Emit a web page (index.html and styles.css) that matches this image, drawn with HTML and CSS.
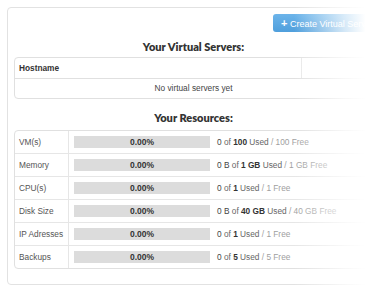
FILE: index.html
```html
<!DOCTYPE html>
<html lang="en">
<head>
  <meta charset="UTF-8">
  <title>Virtual Servers</title>
  <link rel="stylesheet" href="styles.css">
</head>
<body>
  <div class="card">
    <div class="toolbar">
      <button class="create-btn"><span class="plus">+</span> Create Virtual Server</button>
    </div>

    <h2 class="heading">Your Virtual Servers:</h2>
    <div class="servers">
      <div class="servers-head">
        <div class="col-host">Hostname</div>
        <div class="col-rest"></div>
      </div>
      <div class="servers-empty">No virtual servers yet</div>
    </div>

    <h2 class="heading heading-res">Your Resources:</h2>
    <div class="resources">
      <div class="res-row">
        <div class="res-label">VM(s)</div>
        <div class="res-bar-cell"><div class="res-bar">0.00%</div></div>
        <div class="res-info"><span class="num">0</span> of <b>100</b> Used <span class="free">/ 100 Free</span></div>
      </div>
      <div class="res-row">
        <div class="res-label">Memory</div>
        <div class="res-bar-cell"><div class="res-bar">0.00%</div></div>
        <div class="res-info"><span class="num">0 B</span> of <b>1 GB</b> Used <span class="free">/ 1 GB Free</span></div>
      </div>
      <div class="res-row">
        <div class="res-label">CPU(s)</div>
        <div class="res-bar-cell"><div class="res-bar">0.00%</div></div>
        <div class="res-info"><span class="num">0</span> of <b>1</b> Used <span class="free">/ 1 Free</span></div>
      </div>
      <div class="res-row">
        <div class="res-label">Disk Size</div>
        <div class="res-bar-cell"><div class="res-bar">0.00%</div></div>
        <div class="res-info"><span class="num">0 B</span> of <b>40 GB</b> Used <span class="free">/ 40 GB Free</span></div>
      </div>
      <div class="res-row">
        <div class="res-label">IP Adresses</div>
        <div class="res-bar-cell"><div class="res-bar">0.00%</div></div>
        <div class="res-info"><span class="num">0</span> of <b>1</b> Used <span class="free">/ 1 Free</span></div>
      </div>
      <div class="res-row">
        <div class="res-label">Backups</div>
        <div class="res-bar-cell"><div class="res-bar">0.00%</div></div>
        <div class="res-info"><span class="num">0</span> of <b>5</b> Used <span class="free">/ 5 Free</span></div>
      </div>
    </div>

    <div class="fade"></div>
  </div>
</body>
</html>
```

FILE: styles.css
```css
body {
  margin: 0;
  padding: 7px;
  background-color: #ffffff;
  font-family: "Liberation Sans", Arial, sans-serif;
  font-size: 8.3px;
  color: #444;
  overflow: hidden;
}

.card {
  position: relative;
  width: 359px;
  border: 1px solid #e2e2e2;
  border-radius: 4px;
  padding: 6px 6px 15px 6px;
}

.toolbar {
  display: flex;
  justify-content: flex-end;
  height: 18px;
}

.create-btn {
  height: 18px;
  width: 110px;
  margin-right: -10px;
  padding: 0 8px;
  border: none;
  border-radius: 3px;
  background: linear-gradient(#6cb4ea, #4f9fdc);
  color: #ffffff;
  font-family: "Liberation Sans", Arial, sans-serif;
  font-size: 9px;
  text-align: left;
  white-space: nowrap;
  overflow: hidden;
}

.plus {
  font-weight: bold;
  font-size: 11px;
}

.heading {
  margin: 7px 0 2px 0;
  height: 16px;
  line-height: 16px;
  text-align: center;
  font-family: Lato, "Open Sans", sans-serif;
  font-weight: 800;
  font-size: 11px;
  color: #333;
}

.heading-res {
  margin-top: 11px;
  margin-bottom: 4px;
}

.servers {
  border: 1px solid #e0e0e0;
  border-radius: 4px;
}

.servers-head {
  display: flex;
  height: 20px;
  border-bottom: 1px solid #e0e0e0;
}

.col-host {
  width: 282px;
  padding-left: 4px;
  line-height: 20px;
  font-weight: bold;
  color: #333;
  border-right: 1px solid #e8e8e8;
}

.col-rest {
  flex: 1;
}

.servers-empty {
  height: 19px;
  line-height: 19px;
  text-align: center;
  color: #444;
}

.resources {
  border: 1px solid #e0e0e0;
  border-radius: 4px;
}

.res-row {
  display: flex;
  align-items: center;
  height: 22px;
  border-bottom: 1px solid #e6e6e6;
}

.res-row:last-child {
  border-bottom: none;
}

.res-label {
  width: 49px;
  height: 100%;
  padding-left: 4px;
  line-height: 22px;
  color: #555;
  border-right: 1px solid #e6e6e6;
  white-space: nowrap;
}

.res-bar-cell {
  padding: 0 7px 0 5px;
}

.res-bar {
  width: 136px;
  height: 12px;
  line-height: 12px;
  background-color: #dcdcdc;
  text-align: center;
  font-weight: bold;
  font-size: 8.5px;
  color: #333;
}

.res-info {
  white-space: nowrap;
  color: #666;
}

.res-info .num {
  color: #444;
}

.res-info b {
  color: #333;
}

.res-info .free {
  color: #a0a0a0;
}

.fade {
  position: absolute;
  top: -8px;
  bottom: -8px;
  left: 286px;
  right: -20px;
  background: linear-gradient(to right, rgba(255, 255, 255, 0) 0%, rgba(255, 255, 255, 0.75) 48%, #ffffff 68%);
}
```
